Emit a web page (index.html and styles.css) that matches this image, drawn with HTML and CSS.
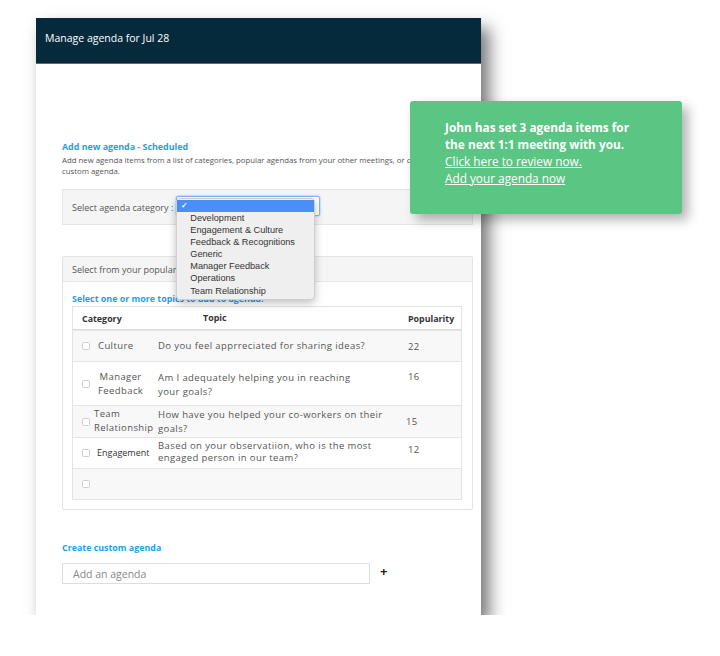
FILE: index.html
```html
<!DOCTYPE html>
<html lang="en">
<head>
    <meta charset="UTF-8">
    <meta name="viewport" content="width=device-width, initial-scale=1.0">
    <title>Manage agenda</title>
    <link rel="stylesheet" href="styles.css">
</head>
<body>
    <div class="card">
        <div class="card-head">Manage agenda for Jul 28</div>

        <div class="card-body">
            <div class="blue-title">Add new agenda - Scheduled</div>
            <p class="desc">Add new agenda items from a list of categories, popular agendas from your other meetings, or create a custom agenda.</p>

            <div class="cat-panel">
                <span class="cat-label">Select agenda category :</span>
                <div class="select-wrap">
                    <div class="select-box"></div>
                    <!-- the open native dropdown -->
                    <ul class="dropdown">
                        <li class="picked">&#10003;</li>
                        <li>Development</li>
                        <li>Engagement &amp; Culture</li>
                        <li>Feedback &amp; Recognitions</li>
                        <li>Generic</li>
                        <li>Manager Feedback</li>
                        <li>Operations</li>
                        <li>Team Relationship</li>
                    </ul>
                </div>
            </div>

            <div class="pop-panel">
                <div class="pop-head">Select from your popular agendas</div>
                <div class="pop-body">
                    <div class="blue-title sub">Select one or more topics to add to agenda:</div>
                    <div class="table">
                        <div class="tr th">
                            <div class="c1">Category</div>
                            <div class="c2 th-topic">Topic</div>
                            <div class="c3">Popularity</div>
                        </div>
                        <div class="tr odd r1">
                            <div class="c1"><span class="chk"></span><span class="cat">Culture</span></div>
                            <div class="c2">Do you feel apprreciated for sharing ideas?</div>
                            <div class="c3">22</div>
                        </div>
                        <div class="tr r2">
                            <div class="c1"><span class="chk"></span><span class="cat mid">Manager<br>Feedback</span></div>
                            <div class="c2">Am I adequately helping you in reaching<br>your goals?</div>
                            <div class="c3 top">16</div>
                        </div>
                        <div class="tr odd r3">
                            <div class="c1"><span class="chk"></span><span class="cat tight">Team<br>Relationship</span></div>
                            <div class="c2">How have you helped your co-workers on their<br>goals?</div>
                            <div class="c3 left">15</div>
                        </div>
                        <div class="tr r4">
                            <div class="c1"><span class="chk"></span><span class="cat small">Engagement</span></div>
                            <div class="c2 lh12">Based on your observatiion, who is the most<br>engaged person in our team?</div>
                            <div class="c3 top4">12</div>
                        </div>
                        <div class="tr odd r5">
                            <div class="c1"><span class="chk"></span></div>
                        </div>
                    </div>
                </div>
            </div>

            <div class="blue-title custom">Create custom agenda</div>
            <div class="add-row">
                <input type="text" class="add-input" placeholder="Add an agenda">
                <span class="plus">+</span>
            </div>
        </div>

        <div class="toast">
            <b>John has set 3 agenda items for<br>the next 1:1 meeting with you.</b><br>
            <a href="#">Click here to review now.</a><br>
            <a href="#">Add your agenda now</a>
        </div>
    </div>
</body>
</html>
```

FILE: styles.css
```css
body{
    margin:0;
    background:#fff;
    font-family:"Open Sans", "Noto Sans", sans-serif;
    color:#444;
}
.card{
    position:relative;
    width:445px;
    height:597px;
    margin:18px 0 0 36px;
    background:#fff;
    box-shadow:8px 10px 16px rgba(0,0,0,0.55);
}
.card-head{
    background:#052a3c;
    border-bottom:1px solid #5d6c74;
    color:#fff;
    font-size:10.5px;
    padding:0 0 5px 9px;
    box-sizing:border-box;
    height:46px;
    display:flex;
    align-items:center;
}
.card-body{
    padding:77px 8px 0 26px;
}
.blue-title{
    color:#1ba2ea;
    font-weight:bold;
    font-size:8.9px;
    line-height:12px;
}
.desc{
    margin:2px 0 0;
    font-size:7.8px;
    line-height:11px;
    color:#555;
    width:400px;
}
.cat-panel{
    margin-top:12px;
    height:34px;
    background:#f5f5f5;
    border:1px solid #e6e6e6;
    display:flex;
    align-items:center;
    padding-left:9px;
}
.cat-label{
    font-size:9px;
    color:#555;
    margin-right:3px;
}
.select-wrap{
    position:relative;
    margin-top:-2px;
}
.select-box{
    width:142px;
    height:18px;
    border:1px solid #8cb6ea;
    box-shadow:0 0 2px #7aaaf0;
    border-radius:2px;
    background:#fff;
}
.dropdown{
    position:absolute;
    top:2px;
    left:0;
    width:139px;
    margin:0;
    padding:1px 0 2px;
    list-style:none;
    background:#efefef;
    border:1px solid #cfcfcf;
    border-radius:4px;
    box-shadow:0 3px 8px rgba(0,0,0,0.25);
    font-family:"Liberation Sans", Arial, sans-serif;
    font-size:9.2px;
    color:#333;
    box-sizing:border-box;
}
.dropdown li{
    line-height:12.1px;
    padding-left:13px;
}
.dropdown li.picked{
    background:#4a8ff7;
    color:#fff;
    padding-left:4px;
    line-height:12px;
    font-size:8px;
    font-weight:bold;
}
.pop-panel{
    margin-top:31px;
    height:252px;
    border:1px solid #e3e3e3;
    border-radius:2px;
}
.pop-head{
    height:24px;
    background:#f5f5f5;
    border-bottom:1px solid #e6e6e6;
    font-size:9px;
    color:#555;
    padding-left:9px;
    display:flex;
    align-items:center;
}
.pop-body{
    padding:11px 10px 0 9px;
}
.blue-title.sub{
    margin-bottom:1px;
}
.table{
    border:1px solid #e3e3e3;
    font-size:9.5px;
    letter-spacing:0.4px;
    color:#555;
}
.tr{
    display:flex;
    align-items:center;
    border-top:1px solid #e6e6e6;
}
.th{
    height:22px;
    border-top:0;
    border-bottom:1px solid #ddd;
    font-weight:bold;
    color:#333;
    font-size:8.9px;
    letter-spacing:0;
    box-shadow:0 1px 1px #e6e6e6;
}
.odd{
    background:#f8f8f8;
}
.r1{ height:30px; }
.r2{ height:43px; }
.r3{ height:31px; }
.r4{ height:30px; }
.r5{ height:30px; }
.c1{
    width:82px;
    flex:none;
    padding-left:9px;
    box-sizing:border-box;
    display:flex;
    align-items:center;
}
.c2{
    width:246px;
    flex:none;
    box-sizing:border-box;
    padding-left:3px;
    line-height:14px;
}
.c3{
    padding-left:7px;
}
.c3.left{ padding-left:5px; }
.th .c1{ padding-left:9px; }
.th-topic{ padding-left:48px; }
.th .c3{ padding-left:7px; }
.c3.top{
    align-self:flex-start;
    padding-top:8px;
}
.c3.top4{
    align-self:flex-start;
    padding-top:5px;
}
.r2 .c2{ padding-top:3px; }
.c2.lh12{
    line-height:12px;
    margin-top:-2px;
}
.chk{
    width:6px;
    height:6px;
    border:1px solid #cfcfcf;
    border-radius:1.5px;
    background:#fff;
    flex:none;
}
.cat{
    margin-left:8px;
    line-height:14px;
}
.cat.mid{
    text-align:center;
}
.cat.tight{
    margin-left:4px;
    margin-top:-2px;
}
.cat.small{
    font-size:9px;
    letter-spacing:0;
    margin-left:7px;
    color:#333;
}
.blue-title.custom{
    margin-top:32px;
}
.add-row{
    margin-top:9px;
    display:flex;
    align-items:center;
}
.add-input{
    width:308px;
    height:21px;
    box-sizing:border-box;
    border:1px solid #ddd;
    padding:0 10px;
    font-family:"Open Sans", sans-serif;
    font-size:10.5px;
    color:#555;
    outline:none;
}
.add-input::placeholder{
    color:#888;
}
.plus{
    margin-left:10px;
    font-weight:bold;
    font-size:13px;
    color:#222;
    margin-top:-6px;
}
.toast{
    position:absolute;
    left:374px;
    top:83px;
    width:272px;
    height:113px;
    box-sizing:border-box;
    padding:18px 0 0 35px;
    background:#5bc583;
    border-radius:3px;
    box-shadow:6px 6px 12px rgba(0,0,0,0.3);
    color:#fff;
    font-size:11.8px;
    line-height:17px;
}
.toast a{
    color:#fff;
}
```
